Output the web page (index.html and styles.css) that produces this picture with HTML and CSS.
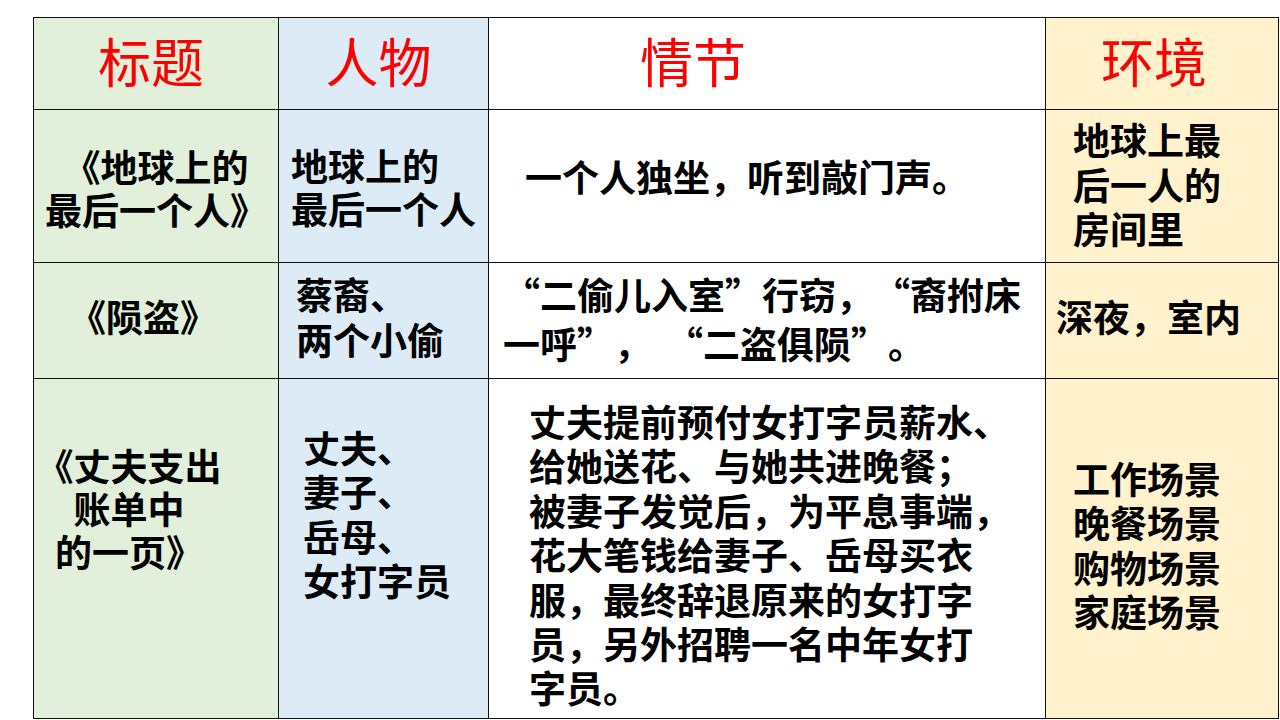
FILE: index.html
```html
<!DOCTYPE html>
<html lang="zh-CN">
<head>
<meta charset="utf-8">
<title>小说要素对比</title>
<link rel="stylesheet" href="styles.css">
</head>
<body>
<table class="grid">
  <colgroup>
    <col class="c-title">
    <col class="c-person">
    <col class="c-plot">
    <col class="c-env">
  </colgroup>
  <tr class="row-head">
    <th class="green">标题</th>
    <th class="blue">人物</th>
    <th class="white head-plot">情节</th>
    <th class="yellow head-env">环境</th>
  </tr>
  <tr class="row-1">
    <td class="green r1-title">《地球上的<br>最后一个人》</td>
    <td class="blue r1-person">地球上的<br>最后一个人</td>
    <td class="white r1-plot">一个人独坐，听到敲门声。</td>
    <td class="yellow r1-env">地球上最<br>后一人的<br>房间里</td>
  </tr>
  <tr class="row-2">
    <td class="green r2-title">《陨盗》</td>
    <td class="blue pl-17">蔡裔、<br>两个小偷</td>
    <td class="white pl-14"><span class="q">“</span>二偷儿入室<span class="q">”</span>行窃，<span class="q">“</span>裔拊床<br>一呼<span class="q">”</span>，<span class="gap"></span><span class="q">“</span>二盗俱陨<span class="q">”</span>。</td>
    <td class="yellow pl-10">深夜，室内</td>
  </tr>
  <tr class="row-3">
    <td class="green r3-title">《丈夫支出<br>账单中<br>的一页》</td>
    <td class="blue r3-person">丈夫、<br>妻子、<br>岳母、<br>女打字员</td>
    <td class="white r3-plot">丈夫提前预付女打字员薪水、<br>给她送花、与她共进晚餐；<br>被妻子发觉后，为平息事端，<br>花大笔钱给妻子、岳母买衣<br>服，最终辞退原来的女打字<br>员，另外招聘一名中年女打<br>字员。</td>
    <td class="yellow pl-27">工作场景<br>晚餐场景<br>购物场景<br>家庭场景</td>
  </tr>
</table>
</body>
</html>
```

FILE: styles.css
```css
html, body {
  margin: 0;
  padding: 0;
  background: #ffffff;
}

body {
  padding: 17px 0 0 33px;
  font-family: "Liberation Sans", "Noto Sans CJK SC", sans-serif;
  color: #000000;
}

.grid {
  border-collapse: collapse;
  table-layout: fixed;
  width: 1245px;
}

.c-title { width: 245px; }
.c-person { width: 210px; }
.c-plot { width: 557px; }
.c-env { width: 233px; }

.grid th,
.grid td {
  border: 1px solid #111111;
  padding: 0;
  vertical-align: middle;
  text-align: left;
  white-space: nowrap;
  text-spacing-trim: space-all;
}

.grid th {
  font-family: "Noto Sans CJK SC", sans-serif;
  font-size: 53px;
  font-weight: 400;
  color: #ff0000;
  text-align: center;
  line-height: 1.2;
  padding: 0 10px 6px 0;
}

.grid td {
  font-size: 37px;
  font-weight: 700;
  line-height: 1.2;
}

.q {
  font-family: "Noto Sans CJK SC", sans-serif;
}

.gap {
  display: inline-block;
  width: 15px;
}

.row-head { height: 92px; }
.row-1 { height: 153px; }
.row-2 { height: 116px; }
.row-3 { height: 340px; }

.green { background: #e2efda; }
.blue { background: #ddebf7; }
.white { background: #ffffff; }
.yellow { background: #fff2cc; }

.grid th.head-plot {
  padding-right: 148px;
}

.grid th.head-env {
  padding-right: 16px;
}

.grid td.pl-10 { padding-left: 10px; }
.grid td.pl-14 { padding-left: 14px; }
.grid td.pl-17 { padding-left: 17px; }
.grid td.pl-27 { padding-left: 27px; }

.grid td.r1-title {
  text-align: center;
  padding-top: 12px;
  line-height: 1.16;
}

.grid td.r1-person {
  padding: 10px 0 0 12px;
  line-height: 1.16;
}

.grid td.r1-plot {
  padding-left: 36px;
  padding-bottom: 12px;
}

.grid td.r1-env {
  padding: 4px 0 0 27px;
}

.grid td.r2-title {
  padding-left: 35px;
}

.grid td.r3-title {
  text-align: center;
  vertical-align: top;
  padding: 69px 54px 0 0;
  line-height: 1.16;
}

.grid td.r3-person {
  vertical-align: top;
  padding: 50px 0 0 24px;
}

.grid td.r3-plot {
  vertical-align: top;
  padding: 24px 0 0 40px;
}
```
